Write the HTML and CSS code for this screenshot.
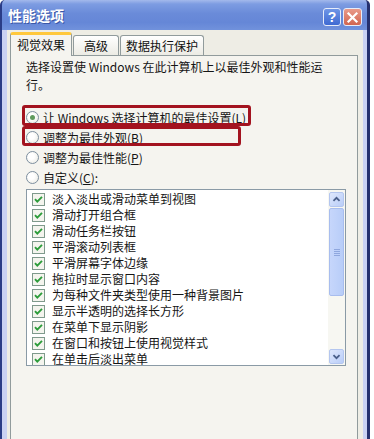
FILE: index.html
```html
<!DOCTYPE html>
<html lang="zh-CN">
<head>
<meta charset="utf-8">
<title>性能选项</title>
<link rel="stylesheet" href="styles.css">
</head>
<body>
<div class="window">
  <div class="titlebar">
    <span class="title">性能选项</span>
    <div class="title-buttons">
      <span class="tbtn help">?</span>
      <span class="tbtn close"><svg viewBox="0 0 17 17" width="17" height="17"><path d="M4.5 4.5 L12.5 12.5 M12.5 4.5 L4.5 12.5" stroke="#fff" stroke-width="2.2" stroke-linecap="square"/></svg></span>
    </div>
  </div>
  <div class="frame">
    <div class="content">
      <div class="tabs">
        <div class="tab active">视觉效果</div>
        <div class="tab wide">高级</div>
        <div class="tab">数据执行保护</div>
      </div>
      <div class="panel">
        <p class="desc">选择设置使 Windows 在此计算机上以最佳外观和性能运<br>行。</p>
        <div class="options">
          <div class="opt"><span class="radio checked"></span><span>让 Windows 选择计算机的最佳设置(<u>L</u>)</span></div>
          <div class="opt"><span class="radio"></span><span>调整为最佳外观(<u>B</u>)</span></div>
          <div class="opt"><span class="radio"></span><span>调整为最佳性能(<u>P</u>)</span></div>
          <div class="opt"><span class="radio"></span><span>自定义(<u>C</u>):</span></div>
          <div class="mark mark-1"></div>
          <div class="mark mark-2"></div>
        </div>
        <div class="listbox">
          <ul class="items">
            <li><svg class="cb" viewBox="0 0 13 13"><rect x="0.5" y="0.5" width="12" height="12" fill="#f4f4ee" stroke="#7f9a8c"/><path d="M3 6.2 L5.3 8.6 L10 3.9" stroke="#2c9c3a" stroke-width="1.9" fill="none"/></svg>淡入淡出或滑动菜单到视图</li>
            <li><svg class="cb" viewBox="0 0 13 13"><rect x="0.5" y="0.5" width="12" height="12" fill="#f4f4ee" stroke="#7f9a8c"/><path d="M3 6.2 L5.3 8.6 L10 3.9" stroke="#2c9c3a" stroke-width="1.9" fill="none"/></svg>滑动打开组合框</li>
            <li><svg class="cb" viewBox="0 0 13 13"><rect x="0.5" y="0.5" width="12" height="12" fill="#f4f4ee" stroke="#7f9a8c"/><path d="M3 6.2 L5.3 8.6 L10 3.9" stroke="#2c9c3a" stroke-width="1.9" fill="none"/></svg>滑动任务栏按钮</li>
            <li><svg class="cb" viewBox="0 0 13 13"><rect x="0.5" y="0.5" width="12" height="12" fill="#f4f4ee" stroke="#7f9a8c"/><path d="M3 6.2 L5.3 8.6 L10 3.9" stroke="#2c9c3a" stroke-width="1.9" fill="none"/></svg>平滑滚动列表框</li>
            <li><svg class="cb" viewBox="0 0 13 13"><rect x="0.5" y="0.5" width="12" height="12" fill="#f4f4ee" stroke="#7f9a8c"/><path d="M3 6.2 L5.3 8.6 L10 3.9" stroke="#2c9c3a" stroke-width="1.9" fill="none"/></svg>平滑屏幕字体边缘</li>
            <li><svg class="cb" viewBox="0 0 13 13"><rect x="0.5" y="0.5" width="12" height="12" fill="#f4f4ee" stroke="#7f9a8c"/><path d="M3 6.2 L5.3 8.6 L10 3.9" stroke="#2c9c3a" stroke-width="1.9" fill="none"/></svg>拖拉时显示窗口内容</li>
            <li><svg class="cb" viewBox="0 0 13 13"><rect x="0.5" y="0.5" width="12" height="12" fill="#f4f4ee" stroke="#7f9a8c"/><path d="M3 6.2 L5.3 8.6 L10 3.9" stroke="#2c9c3a" stroke-width="1.9" fill="none"/></svg>为每种文件夹类型使用一种背景图片</li>
            <li><svg class="cb" viewBox="0 0 13 13"><rect x="0.5" y="0.5" width="12" height="12" fill="#f4f4ee" stroke="#7f9a8c"/><path d="M3 6.2 L5.3 8.6 L10 3.9" stroke="#2c9c3a" stroke-width="1.9" fill="none"/></svg>显示半透明的选择长方形</li>
            <li><svg class="cb" viewBox="0 0 13 13"><rect x="0.5" y="0.5" width="12" height="12" fill="#f4f4ee" stroke="#7f9a8c"/><path d="M3 6.2 L5.3 8.6 L10 3.9" stroke="#2c9c3a" stroke-width="1.9" fill="none"/></svg>在菜单下显示阴影</li>
            <li><svg class="cb" viewBox="0 0 13 13"><rect x="0.5" y="0.5" width="12" height="12" fill="#f4f4ee" stroke="#7f9a8c"/><path d="M3 6.2 L5.3 8.6 L10 3.9" stroke="#2c9c3a" stroke-width="1.9" fill="none"/></svg>在窗口和按钮上使用视觉样式</li>
            <li><svg class="cb" viewBox="0 0 13 13"><rect x="0.5" y="0.5" width="12" height="12" fill="#f4f4ee" stroke="#7f9a8c"/><path d="M3 6.2 L5.3 8.6 L10 3.9" stroke="#2c9c3a" stroke-width="1.9" fill="none"/></svg>在单击后淡出菜单</li>
          </ul>
          <div class="scrollbar">
            <div class="sbtn"><svg viewBox="0 0 15 15" width="15" height="15"><path d="M4 9 L7.5 5.5 L11 9" stroke="#4a5f8a" stroke-width="2" fill="none"/></svg></div>
            <div class="thumb"><span class="grip"></span></div>
            <div class="track"></div>
            <div class="sbtn"><svg viewBox="0 0 15 15" width="15" height="15"><path d="M4 6 L7.5 9.5 L11 6" stroke="#4a5f8a" stroke-width="2" fill="none"/></svg></div>
          </div>
        </div>
      </div>
    </div>
  </div>
</div>
</body>
</html>
```
FILE: styles.css
```css
* { box-sizing: border-box; margin: 0; padding: 0; }
html, body { background: #ffffff; }
body {
  width: 374px;
  height: 439px;
  overflow: hidden;
  font-family: "Noto Sans CJK SC", "Liberation Sans", sans-serif;
  font-size: 12px;
  color: #151515;
}
.window {
  width: 370px;
  height: 439px;
  display: flex;
  flex-direction: column;
}
.titlebar {
  flex: none;
  height: 30px;
  display: flex;
  align-items: center;
  justify-content: space-between;
  padding: 0 5px 0 6px;
  border-left: 2px solid #2a3c86;
  border-right: 3px solid #25306e;
  border-radius: 5px 5px 0 0;
  background: linear-gradient(#a3b9ec 0, #7d9ce2 4px, #6a8bd9 45%, #6587d7 75%, #7192dc 100%);
}
.title {
  color: #ffffff;
  font-size: 14px;
  font-weight: bold;
  letter-spacing: 0;
  text-shadow: 1px 1px 0 #3a57a8;
  line-height: 18px;
}
.title-buttons { display: flex; gap: 2px; margin-top: 4px; }
.tbtn {
  width: 18px;
  height: 18px;
  border: 1px solid #e6ecfa;
  border-radius: 3px;
  display: flex;
  align-items: center;
  justify-content: center;
}
.help {
  background: linear-gradient(#6e95e6, #3f6ad2);
  color: #fff;
  font-family: "Liberation Sans", sans-serif;
  font-weight: bold;
  font-size: 14px;
  line-height: 16px;
}
.close {
  width: 19px;
  background: linear-gradient(#e99a8a, #d2654f);
}
.frame {
  flex: 1;
  min-height: 0;
  display: flex;
  border-left: 2px solid #2a3c86;
  border-right: 3px solid #25306e;
  background: #c9d1f3;
  padding: 0 4px 0 5px;
}
.content {
  flex: 1;
  display: flex;
  flex-direction: column;
  background: #eeede5;
  padding: 2px 5px 0 3px;
}
.tabs {
  display: flex;
  align-items: flex-end;
  gap: 1px;
  height: 23px;
  position: relative;
  z-index: 1;
}
.tab {
  height: 20px;
  padding: 0 5px;
  border: 1px solid #919b9c;
  border-bottom: none;
  border-radius: 3px 3px 0 0;
  background: linear-gradient(#ffffff, #ecebe4);
  line-height: 19px;
  color: #111;
}
.tab.wide { padding: 0 10px; }
.tab.active {
  height: 24px;
  margin-bottom: -1px;
  padding: 0 6px;
  border-top: 3px solid #ffc83c;
  background: #f5f4ef;
  line-height: 20px;
}
.panel {
  flex: 1;
  position: relative;
  background: #f5f4ef;
  border: 1px solid #919b9c;
  border-bottom: none;
  padding: 2px 11px 0 15px;
}
.desc { line-height: 18px; }
.options {
  position: relative;
  margin-top: 13px;
}
.opt {
  height: 20px;
  display: flex;
  align-items: center;
  gap: 4px;
}
.radio {
  width: 13px;
  height: 13px;
  border-radius: 50%;
  border: 1px solid #7d8f9f;
  background: radial-gradient(circle at 40% 40%, #ffffff 30%, #e6e6dd 100%);
  position: relative;
  flex: none;
}
.radio.checked::after {
  content: "";
  position: absolute;
  left: 3px;
  top: 3px;
  width: 5px;
  height: 5px;
  border-radius: 50%;
  background: #5f9a5c;
}
.mark {
  position: absolute;
  border: 3px solid #a3131f;
  border-radius: 3px;
}
.mark-1 { left: -4px; top: -2px; width: 229px; height: 21px; }
.mark-2 { left: -4px; top: 19px; width: 219px; height: 20px; }
.listbox {
  margin-top: 2px;
  width: 320px;
  height: 177px;
  border: 1px solid #8a9aa6;
  background: #ffffff;
  display: flex;
  overflow: hidden;
}
.items {
  flex: 1;
  list-style: none;
  padding: 1px 0 0 5px;
  overflow: hidden;
}
.items li {
  height: 16px;
  display: flex;
  align-items: center;
  gap: 7px;
  white-space: nowrap;
  line-height: 16px;
}
.cb { width: 13px; height: 13px; flex: none; }
.scrollbar {
  width: 17px;
  display: flex;
  flex-direction: column;
  background: #f7f7f2;
  padding: 2px 1px 1px 1px;
}
.sbtn {
  height: 15px;
  flex: none;
  border: 1px solid #b4c6ef;
  border-radius: 2px;
  background: linear-gradient(135deg, #dfe8fd, #b9cdf8);
  display: flex;
  align-items: center;
  justify-content: center;
}
.thumb {
  height: 88px;
  flex: none;
  margin-top: 1px;
  border: 1px solid #a8bdee;
  border-radius: 2px;
  background: linear-gradient(90deg, #c6d6fb, #b8cdf8);
  display: flex;
  align-items: center;
  justify-content: center;
}
.grip {
  width: 6px;
  height: 7px;
  background: repeating-linear-gradient(#8fa7de 0 1px, transparent 1px 2px);
}
.track { flex: 1; }
```
